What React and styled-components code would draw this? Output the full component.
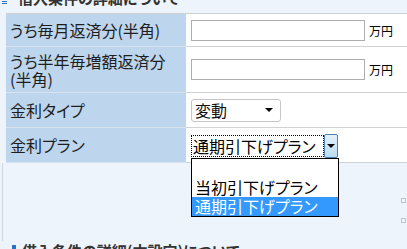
import React from 'react'
import styled, { createGlobalStyle } from 'styled-components'

const GlobalStyle = createGlobalStyle`
  html, body {
    margin: 0;
    padding: 0;
  }
  body {
    font-family: "Noto Sans CJK JP", "Liberation Sans", sans-serif;
    font-feature-settings: "palt";
    color: #222;
  }
`

const rows = [
  { label: 'うち毎月返済分(半角)', height: 32, kind: 'input' },
  { label: 'うち半年毎増額返済分(半角)', height: 45, kind: 'input' },
  { label: '金利タイプ', height: 34, kind: 'select' },
  { label: '金利プラン', height: 34, kind: 'plan' },
]

const planOptions = ['', '当初引下げプラン', '通期引下げプラン']

export default function App() {
  return (
    <Page>
      <GlobalStyle />
      <TopHeading>
        <MenuIcon width="5" height="6" viewBox="0 0 5 6">
          <rect x="0" y="0" width="5" height="1" fill="#2a6fc9" />
          <rect x="0" y="2" width="5" height="1" fill="#2a6fc9" />
          <rect x="0" y="4" width="5" height="1" fill="#2a6fc9" />
        </MenuIcon>
        借入条件の詳細について
      </TopHeading>

      <Table>
        {rows.map((row, i) => (
          <React.Fragment key={i}>
            <LabelCell $h={row.height}>{row.label}</LabelCell>
            <ValueCell $h={row.height}>
              {row.kind === 'input' && (
                <>
                  <TextInput />
                  <Unit>万円</Unit>
                </>
              )}
              {row.kind === 'select' && (
                <SelectBox>
                  <span>変動</span>
                  <Arrow />
                </SelectBox>
              )}
              {row.kind === 'plan' && (
                <PlanSelect>
                  <PlanText>通期引下げプラン</PlanText>
                  <PlanButton>
                    <Arrow />
                  </PlanButton>
                  <DropList>
                    {planOptions.map((o, j) => (
                      <Option key={j} $selected={j === 2}>{o}</Option>
                    ))}
                  </DropList>
                </PlanSelect>
              )}
            </ValueCell>
          </React.Fragment>
        ))}
      </Table>

      <Spacer>
        <Dot />
        <Dot />
      </Spacer>

      <BottomHeading>
        <Square />
        借入条件の詳細(本設定)について
      </BottomHeading>
    </Page>
  )
}

const Page = styled.div`
  width: 407px;
  height: 249px;
  overflow: hidden;
  background: #eef4fb;
`

const TopHeading = styled.h2`
  margin: -12px 0 0 0;
  height: 20px;
  display: flex;
  align-items: center;
  font-size: 15px;
  line-height: 20px;
  font-weight: 700;
  color: #333;
`

const MenuIcon = styled.svg`
  margin: 0 11px 3px 2px;
  align-self: flex-end;
`

const Table = styled.div`
  margin: 5px 0 0 6px;
  display: grid;
  grid-template-columns: 180px 1fr;
  border-top: 1px solid #cfcfcf;
`

const LabelCell = styled.div`
  min-height: ${p => p.$h}px;
  background: #bdd6ee;
  border-bottom: 1px solid #d8e2ec;
  padding: 0 8px 0 4px;
  display: flex;
  align-items: center;
  font-size: 16px;
  line-height: 18px;
  color: #1e1e1e;
`

const ValueCell = styled.div`
  min-height: ${p => p.$h}px;
  background: #fff;
  border-bottom: 1px solid #d2d2d2;
  padding-left: 5px;
  display: flex;
  align-items: center;
`

const TextInput = styled.input`
  box-sizing: border-box;
  width: 174px;
  height: 21px;
  border: 1px solid #adadad;
  background: #fff;
  margin: 0;
  padding: 0 2px;
`

const Unit = styled.span`
  margin-left: 4px;
  font-size: 12px;
  color: #000;
`

const SelectBox = styled.div`
  box-sizing: border-box;
  width: 90px;
  height: 23px;
  border: 1px solid #c6c6c6;
  border-radius: 3px;
  background: #fff;
  display: flex;
  align-items: center;
  justify-content: space-between;
  padding: 0 7px 0 3px;
  font-size: 16px;
  color: #111;
`

const Arrow = styled.span`
  width: 0;
  height: 0;
  border-left: 4px solid transparent;
  border-right: 4px solid transparent;
  border-top: 4px solid #000;
`

const PlanSelect = styled.div`
  position: relative;
  width: 147px;
  height: 24px;
  display: flex;
  align-items: stretch;
  margin-top: 1px;
`

const PlanText = styled.div`
  box-sizing: border-box;
  width: 133px;
  margin: 1px 0;
  border: 1px dotted #000;
  font-size: 16px;
  line-height: 20px;
  padding-left: 1px;
  color: #000;
  white-space: nowrap;
  overflow: hidden;
`

const PlanButton = styled.div`
  box-sizing: border-box;
  width: 14px;
  border: 1px solid #4f7fae;
  border-radius: 2px;
  background: linear-gradient(#e3f1fb, #b9dcf3);
  display: flex;
  align-items: center;
  justify-content: center;
`

const DropList = styled.div`
  position: absolute;
  top: 100%;
  left: 0;
  width: 148px;
  box-sizing: border-box;
  border: 1px solid #000;
  background: #fff;
  z-index: 2;
`

const Option = styled.div`
  height: 19px;
  line-height: 19px;
  padding-left: 3px;
  font-size: 16px;
  white-space: nowrap;
  color: ${p => (p.$selected ? '#fff' : '#000')};
  background: ${p => (p.$selected ? '#3399ff' : '#fff')};
`

const Spacer = styled.div`
  height: 78px;
  margin-left: 2px;
  border-left: 1px solid #d3d8de;
  box-sizing: border-box;
  padding: 35px 1px 0 0;
  display: flex;
  flex-direction: column;
  align-items: flex-end;
  gap: 15px;
`

const Dot = styled.span`
  width: 5px;
  height: 5px;
  box-sizing: border-box;
  border: 1px solid #c4c4c4;
`

const BottomHeading = styled.h2`
  margin: 0;
  padding-left: 12px;
  display: flex;
  align-items: flex-start;
  font-size: 15px;
  line-height: 20px;
  font-weight: 700;
  color: #333;
`

const Square = styled.span`
  width: 4px;
  height: 4px;
  flex: none;
  background: #2a6fc9;
  margin: 4px 6px 0 0;
`
